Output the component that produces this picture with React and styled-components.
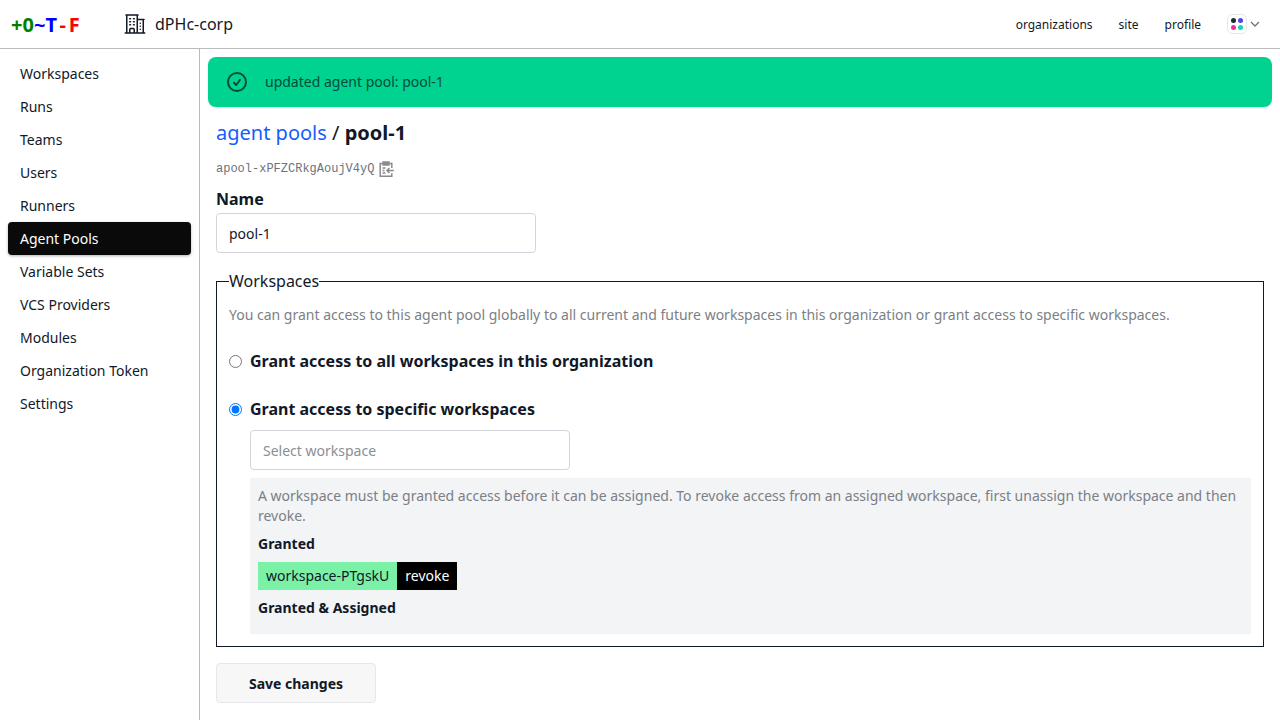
import React from 'react'
import styled, { createGlobalStyle } from 'styled-components'

const GlobalStyle = createGlobalStyle`
  html, body {
    margin: 0;
    padding: 0;
    background: #fff;
    color: #111827;
    font-family: "Noto Sans", sans-serif;
    font-size: 14px;
    overflow: hidden;
  }
  * { box-sizing: border-box; }
`

const Page = styled.div`
  width: 1280px;
  height: 720px;
  display: flex;
  flex-direction: column;
`

const Header = styled.header`
  height: 49px;
  flex: none;
  display: flex;
  align-items: center;
  border-bottom: 1px solid #bbb;
  padding: 0 20px 0 11px;
`

const Logo = styled.div`
  display: flex;
  font-weight: 700;
  font-size: 20px;
  width: 112px;
`

const LogoChar = styled.span`
  width: 11.5px;
  text-align: center;
  color: ${(p) => p.$color};
`

const OrgName = styled.div`
  display: flex;
  align-items: center;
  gap: 8px;
  font-size: 16px;
  flex: 1;
`

const TopLinks = styled.nav`
  display: flex;
  align-items: center;
  gap: 26px;
  font-size: 12px;
`

const AvatarMenu = styled.div`
  display: flex;
  align-items: center;
  gap: 3px;
`

const Avatar = styled.div`
  width: 20px;
  height: 20px;
  border: 1px solid #e5e7eb;
  border-radius: 5px;
  display: grid;
  grid-template-columns: 5px 5px;
  gap: 2px;
  place-content: center;
`

const Dot = styled.span`
  width: 5px;
  height: 5px;
  border-radius: 50%;
  background: ${(p) => p.$color};
`

const Body = styled.div`
  flex: 1;
  display: flex;
  min-height: 0;
`

const Sidebar = styled.aside`
  width: 200px;
  flex: none;
  border-right: 1px solid #bbb;
  padding: 8px;
  display: flex;
  flex-direction: column;
`

const NavItem = styled.a`
  height: 33px;
  display: flex;
  align-items: center;
  padding: 0 12px;
  border-radius: 4px;
  color: ${(p) => (p.$active ? '#fff' : '#111827')};
  background: ${(p) => (p.$active ? '#0a0a0a' : 'transparent')};
  box-shadow: ${(p) => (p.$active ? '0 1px 3px rgba(0,0,0,0.3)' : 'none')};
`

const Main = styled.main`
  flex: 1;
  min-width: 0;
  padding: 8px;
`

const Flash = styled.div`
  height: 50px;
  display: flex;
  align-items: center;
  gap: 16px;
  padding: 0 17px 2px;
  border-radius: 8px;
  background: #00d390;
  color: #004c39;
  box-shadow: 0 1px 2px rgba(0,0,0,0.1);
`

const FlashIcon = styled.svg`
  width: 24px;
  height: 24px;
  margin-bottom: -2px;
`

const Content = styled.div`
  padding: 0 8px;
`

const Title = styled.h1`
  margin: 11px 0 0;
  font-size: 20px;
  line-height: 30px;
  font-weight: 400;
  color: #111827;
`

const Crumb = styled.a`
  color: #155dfc;
`

const Current = styled.span`
  font-weight: 700;
`

const IdRow = styled.div`
  display: flex;
  align-items: center;
  gap: 5px;
  margin-top: 13px;
  height: 16px;
  color: #6b7280;
  font-family: "Liberation Mono", monospace;
  font-size: 12px;
`

const NameField = styled.div`
  margin-top: 10px;
`

const FieldLabel = styled.label`
  display: block;
  font-size: 16px;
  line-height: 24px;
  font-weight: 700;
`

const TextBox = styled.div`
  width: 320px;
  height: 40px;
  margin-top: 2px;
  padding: 0 12px;
  display: flex;
  align-items: center;
  border: 1px solid #d1d5db;
  border-radius: 4px;
  color: ${(p) => (p.$placeholder ? '#8b8f96' : '#111827')};
`

const Fieldset = styled.fieldset`
  margin: 17px 0 0;
  padding: 0 12px 12px;
  border: 1px solid #111827;
  min-width: 0;
`

const Legend = styled.legend`
  padding: 0;
  font-size: 16px;
  line-height: 22px;
`

const Description = styled.p`
  margin: 13px 0 0;
  line-height: 20px;
  color: #7b7f86;
`

const RadioRow = styled.label`
  display: flex;
  align-items: center;
  gap: 8px;
  margin-top: ${(p) => p.$top}px;
  height: 24px;
  font-size: 16px;
  font-weight: 700;
`

const Radio = styled.input`
  width: 13px;
  height: 13px;
  margin: 0;
`

const Indented = styled.div`
  margin-left: 21px;
  margin-top: 9px;
`

const InfoBox = styled.div`
  margin-top: 8px;
  padding: 8px;
  height: 156px;
  background: #f3f4f6;
  color: #7b7f86;
  line-height: 20px;
`

const BoxHeading = styled.div`
  margin-top: 8px;
  color: #111827;
  font-weight: 700;
  line-height: 20px;
`

const Chip = styled.div`
  display: inline-flex;
  margin-top: 8px;
  height: 28px;
  vertical-align: top;
  line-height: 28px;
`

const ChipName = styled.span`
  padding: 0 8px;
  background: #7bf1a8;
  color: #111827;
`

const ChipAction = styled.button`
  padding: 0 8px;
  border: 0;
  background: #000;
  color: #fff;
  font: inherit;
`

const SaveButton = styled.button`
  display: block;
  width: 160px;
  height: 40px;
  margin-top: 16px;
  border: 1px solid #e5e7eb;
  border-radius: 4px;
  background: #f7f7f8;
  color: #111827;
  font-family: inherit;
  font-size: 14px;
  font-weight: 700;
`

const navItems = [
  'Workspaces',
  'Runs',
  'Teams',
  'Users',
  'Runners',
  'Agent Pools',
  'Variable Sets',
  'VCS Providers',
  'Modules',
  'Organization Token',
  'Settings',
]

const logoChars = [
  ['+', '#008000'],
  ['0', '#008000'],
  ['~', '#0000ff'],
  ['T', '#0000ff'],
  ['-', '#ff0000'],
  ['F', '#ff0000'],
]

const BuildingIcon = () => (
  <svg width="24" height="24" viewBox="0 0 24 24" fill="none" stroke="#111827" strokeWidth="1.5" strokeLinecap="round" strokeLinejoin="round">
    <path d="M2.25 21h19.5m-18-18v18m10.5-18v18m6-13.5V21M6.75 6.75h.75m-.75 3h.75m-.75 3h.75m3-6h.75m-.75 3h.75m-.75 3h.75M6.75 21v-3.375c0-.621.504-1.125 1.125-1.125h2.25c.621 0 1.125.504 1.125 1.125V21M3 3h12m-.75 4.5H21m-3.75 3.75h.008v.008h-.008v-.008Zm0 3h.008v.008h-.008v-.008Zm0 3h.008v.008h-.008v-.008Z" />
  </svg>
)

const CheckCircleIcon = () => (
  <FlashIcon viewBox="0 0 24 24" fill="none" stroke="#004c39" strokeWidth="2" strokeLinecap="round" strokeLinejoin="round">
    <path d="M9 12.75 11.25 15 15 9.75M21 12a9 9 0 1 1-18 0 9 9 0 0 1 18 0Z" />
  </FlashIcon>
)

const ClipboardIcon = () => (
  <svg width="15" height="16" viewBox="0 0 15 16" fill="none" stroke="#8a8a8a" strokeWidth="1.5">
    <path d="M3.5 2.5H1.2v12.8h11.6v-3M12.8 7V2.5h-2.3" />
    <path d="M4 1h6v3H4z" fill="#8a8a8a" />
    <path d="M3.5 7h3M3.5 9.5h2M3.5 12h3M14.8 9.5H8m2.4-2.4L8 9.5l2.4 2.4" />
  </svg>
)

const Chevron = () => (
  <svg width="10" height="10" viewBox="0 0 10 10" fill="none" stroke="#6b7280" strokeWidth="1.3">
    <path d="m1 3 4 4 4-4" />
  </svg>
)

export default () => (
  <Page>
    <GlobalStyle />
    <Header>
      <Logo>
        {logoChars.map(([char, color]) => (
          <LogoChar key={char} $color={color}>
            {char}
          </LogoChar>
        ))}
      </Logo>
      <OrgName>
        <BuildingIcon />
        dPHc-corp
      </OrgName>
      <TopLinks>
        <a>organizations</a>
        <a>site</a>
        <a>profile</a>
        <AvatarMenu>
          <Avatar>
            <Dot $color="#1f2937" />
            <Dot $color="#4f46e5" />
            <Dot $color="#ec2f9b" />
            <Dot $color="#14d6b4" />
          </Avatar>
          <Chevron />
        </AvatarMenu>
      </TopLinks>
    </Header>
    <Body>
      <Sidebar>
        {navItems.map((item) => (
          <NavItem key={item} $active={item === 'Agent Pools'}>
            {item}
          </NavItem>
        ))}
      </Sidebar>
      <Main>
        <Flash>
          <CheckCircleIcon />
          updated agent pool: pool-1
        </Flash>
        <Content>
          <Title>
            <Crumb>agent pools</Crumb> / <Current>pool-1</Current>
          </Title>
          <IdRow>
            apool-xPFZCRkgAoujV4yQ
            <ClipboardIcon />
          </IdRow>
          <NameField>
            <FieldLabel>Name</FieldLabel>
            <TextBox>pool-1</TextBox>
          </NameField>
          <Fieldset>
            <Legend>Workspaces</Legend>
            <Description>
              You can grant access to this agent pool globally to all current and future workspaces in this organization or grant access to specific workspaces.
            </Description>
            <RadioRow $top={24}>
              <Radio type="radio" name="scope" readOnly />
              Grant access to all workspaces in this organization
            </RadioRow>
            <RadioRow $top={24}>
              <Radio type="radio" name="scope" defaultChecked />
              Grant access to specific workspaces
            </RadioRow>
            <Indented>
              <TextBox $placeholder>Select workspace</TextBox>
              <InfoBox>
                A workspace must be granted access before it can be assigned. To revoke access from an assigned workspace, first unassign the workspace and then revoke.
                <BoxHeading>Granted</BoxHeading>
                <Chip>
                  <ChipName>workspace-PTgskU</ChipName>
                  <ChipAction>revoke</ChipAction>
                </Chip>
                <BoxHeading>Granted &amp; Assigned</BoxHeading>
              </InfoBox>
            </Indented>
          </Fieldset>
          <SaveButton>Save changes</SaveButton>
        </Content>
      </Main>
    </Body>
  </Page>
)
